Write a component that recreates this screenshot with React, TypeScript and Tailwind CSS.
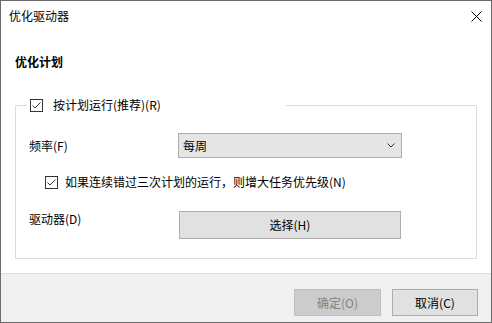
import React from 'react';

const font = { fontFamily: '"Noto Sans CJK SC", "Noto Sans", sans-serif' };

function Check() {
  return (
    <span className="flex items-center justify-center w-[13px] h-[13px] border border-[#333333] bg-white shrink-0">
      <svg width="11" height="11" viewBox="0 0 11 11" fill="none">
        <path d="M1.5 5.5 L4 8 L9.5 2.5" stroke="#333333" strokeWidth="1" />
      </svg>
    </span>
  );
}

export default function App() {
  return (
    <div
      className="w-[492px] h-[323px] border border-[#6b6b6b] bg-white flex flex-col text-[12px] leading-[16px] text-black overflow-hidden"
      style={font}
    >
      {/* Title bar */}
      <div className="h-[30px] flex items-center justify-between pl-[8px] pr-[9px] shrink-0">
        <span>优化驱动器</span>
        <svg width="11" height="11" viewBox="0 0 11 11" fill="none">
          <path d="M0.5 0.5 L10.5 10.5 M10.5 0.5 L0.5 10.5" stroke="#000" strokeWidth="1" />
        </svg>
      </div>

      {/* Body */}
      <div className="flex-1 px-[14px]">
        <div className="mt-[23px] font-bold">优化计划</div>

        <fieldset className="mt-[28px] border border-[#dcdcdc]">
          <legend className="ml-[11px] w-[259px] pl-[3px] h-[14px] flex items-center">
            <Check />
            <span className="ml-[10px]">按计划运行(推荐)(R)</span>
          </legend>

          <div className="px-[13px] pb-[19px]">
            <div className="mt-[21px] flex items-center">
              <span className="w-[149px]">频率(F)</span>
              <div className="w-[224px] h-[25px] border border-[#adadad] bg-[#e5e5e5] flex items-center justify-between pl-[4px] pr-[6px]">
                <span>每周</span>
                <svg width="8" height="5" viewBox="0 0 8 5" fill="none">
                  <path d="M0.5 0.5 L4 4 L7.5 0.5" stroke="#333" strokeWidth="1" />
                </svg>
              </div>
            </div>

            <div className="mt-[16px] pl-[16px] flex items-center">
              <Check />
              <span className="ml-[7px]">如果连续错过三次计划的运行，则增大任务优先级(N)</span>
            </div>

            <div className="mt-[21px] flex items-start">
              <span className="w-[150px]">驱动器(D)</span>
              <div className="w-[222px] h-[28px] border border-[#adadad] bg-[#e1e1e1] flex items-center justify-center">
                选择(H)
              </div>
            </div>
          </div>
        </fieldset>
      </div>

      {/* Footer */}
      <div className="h-[49px] shrink-0 border-t border-[#dfdfdf] bg-[#f0f0f0] flex justify-end gap-[11px] pt-[15px] pr-[13px]">
        <div className="w-[87px] h-[27px] border border-[#bfbfbf] bg-[#cccccc] text-[#838383] flex items-center justify-center">
          确定(O)
        </div>
        <div className="w-[86px] h-[27px] border border-[#adadad] bg-[#e1e1e1] flex items-center justify-center">
          取消(C)
        </div>
      </div>
    </div>
  );
}
